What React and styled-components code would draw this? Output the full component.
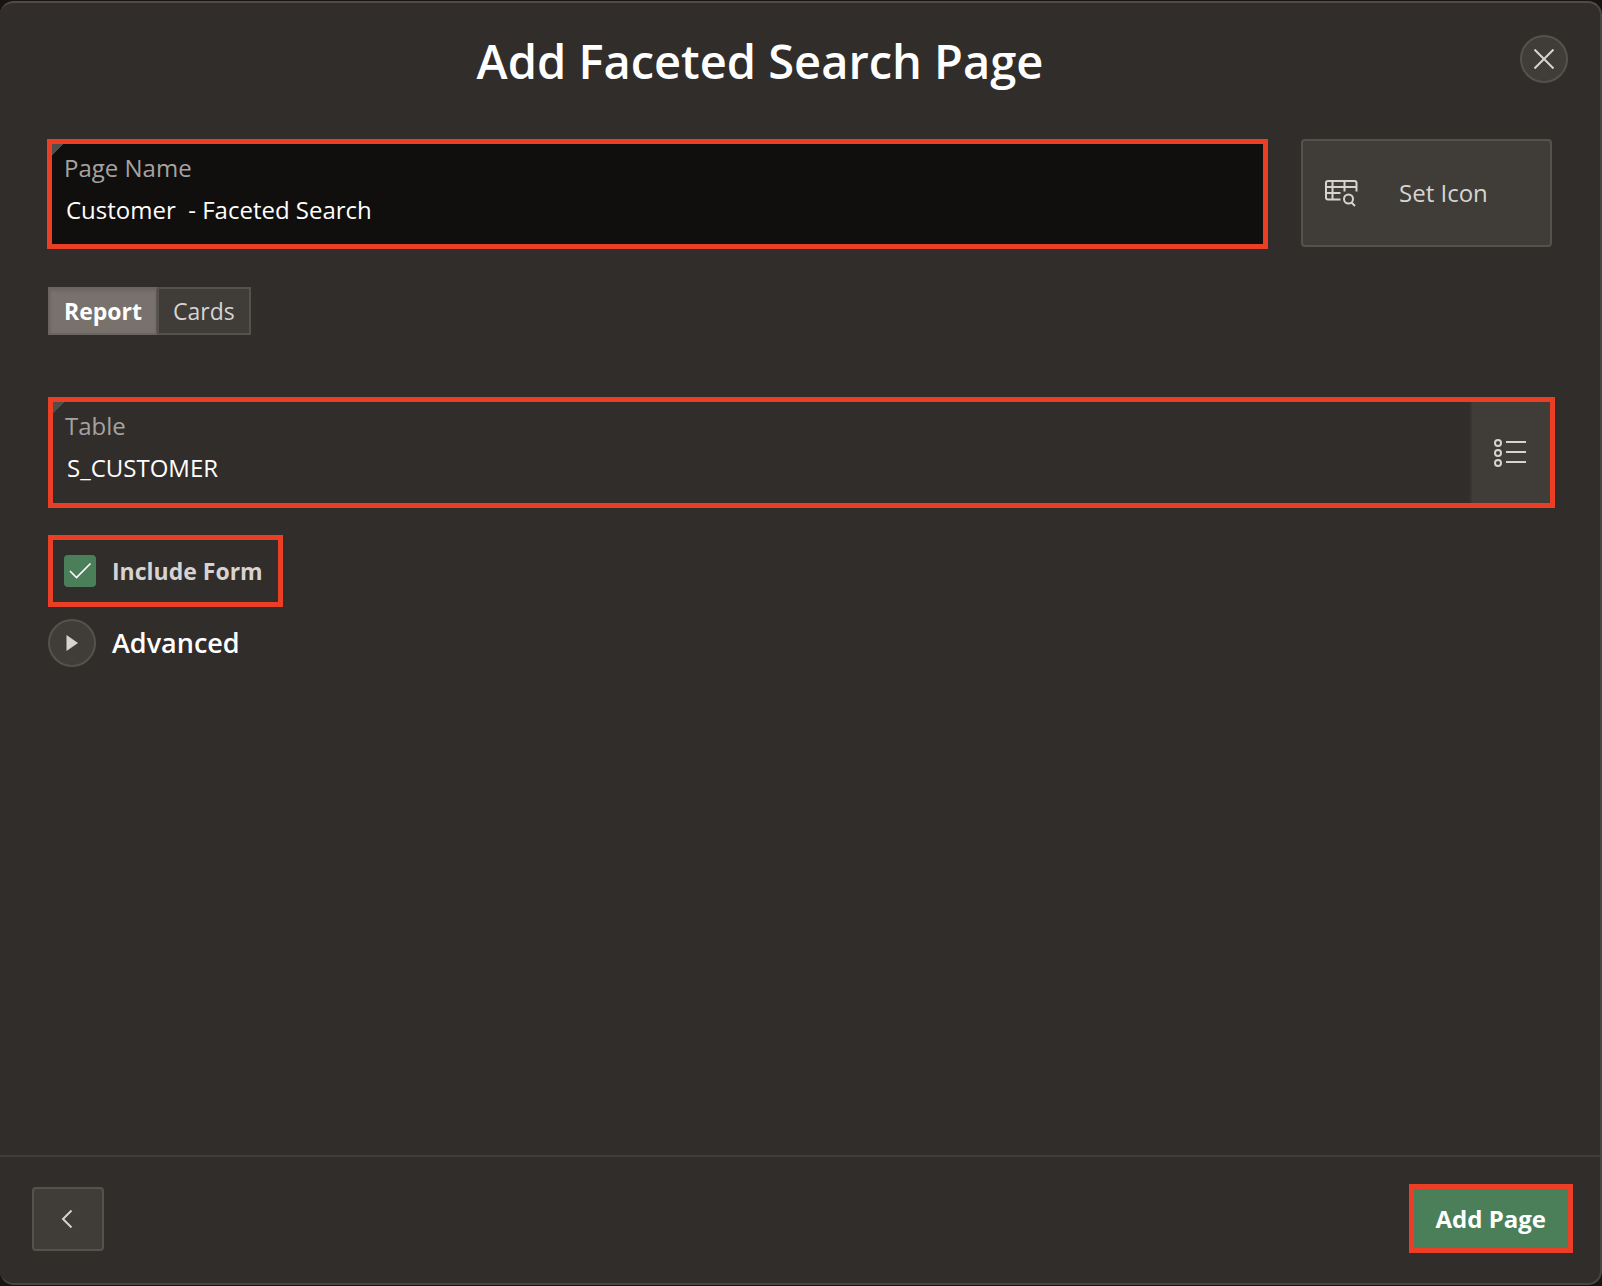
import React, { useState } from "react";
import styled, { createGlobalStyle } from "styled-components";

const GlobalStyle = createGlobalStyle`
  *, *::before, *::after { box-sizing: border-box; }
  body {
    margin: 0;
    background: #171412;
    color: #fff;
    font-family: "Open Sans", "Noto Sans", sans-serif;
    font-size: 24px;
    line-height: 32px;
  }
  button, input { font: inherit; color: inherit; margin: 0; }
  button { cursor: pointer; padding: 0; }
`;

const Dialog = styled.main`
  display: flex;
  flex-direction: column;
  min-height: calc(100vh - 2px);
  margin: 1px 0;
  background: #312d2a;
  border: 2px solid #494543;
  border-top-color: #524a48;
  border-left-width: 0;
  border-radius: 14px;
`;

const Header = styled.header`
  display: flex;
  align-items: flex-start;
  padding: 32px 32px 54px 0;
`;

const Title = styled.h1`
  flex: 1;
  margin: 0;
  padding-top: 2px;
  font-size: 47px;
  line-height: 48px;
  font-weight: 600;
  text-align: center;
`;

const Control = styled.button`
  display: flex;
  align-items: center;
  background: #403c38;
  border: 2px solid #55514d;
  border-radius: 4px;
  color: #d6d4d2;
`;

const CloseButton = styled(Control)`
  justify-content: center;
  width: 48px;
  height: 48px;
  border-radius: 50%;
`;

const Body = styled.form`
  flex: 1;
  display: flex;
  flex-direction: column;
  align-items: flex-start;
  padding: 0 45px 32px 47px;
`;

const NameRow = styled.div`
  display: flex;
  align-items: flex-start;
  align-self: stretch;
  gap: 33px;
  padding-right: 3px;
`;

const Highlight = styled.div`
  display: flex;
  border: 5px solid #ea3f24;
`;

const FieldFrame = styled(Highlight)`
  flex: 1;
  height: ${(p) => p.$height}px;
  background: linear-gradient(135deg, #504d4b 8px, transparent 8px) ${(p) => p.$fill};
`;

const Field = styled.div`
  flex: 1;
  display: flex;
  flex-direction: column;
  padding: 8px 12px;
`;

const FieldLabel = styled.label`
  color: #a5a3a1;
`;

const TextInput = styled.input`
  width: 100%;
  height: 40px;
  margin-top: 5px;
  padding: 0 2px;
  border: 0;
  outline: 0;
  background: transparent;
  color: #fff;
`;

const IconButton = styled(Control)`
  width: 251px;
  height: 108px;
  gap: 41px;
  padding-left: 22px;
`;

const Pills = styled.fieldset`
  display: flex;
  margin: 38px 0 62px 1px;
  padding: 0;
  border: 0;
`;

const Pill = styled.label`
  position: relative;
  height: 48px;
  padding: 6px 14px;
  border: 2px solid #55514d;
  background: #403c38;
  color: #d6d4d2;
  font-size: 23px;
  cursor: pointer;

  & + & { margin-left: -1px; }

  &:has(input:checked) {
    background: #78716c;
    border-color: #6a6560;
    border-right-color: #5c5753;
    box-shadow: inset 0 2px 3px rgba(0, 0, 0, 0.1);
    color: #fff;
    font-weight: 700;
  }

  input {
    position: absolute;
    inset: 0;
    width: 100%;
    height: 100%;
    opacity: 0;
    cursor: pointer;
  }
`;

const TableRow = styled.div`
  display: flex;
  align-self: stretch;
  padding-left: 1px;
`;

const ListButton = styled(Control)`
  justify-content: center;
  width: 80px;
  padding-right: 2px;
  border-width: 0 0 0 2px;
  border-color: #393532;
  border-radius: 0;
`;

const CheckFrame = styled(Highlight)`
  margin: 27px 0 12px 1px;
  height: 72px;
  align-items: center;
  padding: 0 15px 0 11px;
`;

const CheckLabel = styled.label`
  display: grid;
  grid-template-columns: 32px auto;
  align-items: center;
  gap: 16px;
  color: #d6d4d2;
  font-size: 23px;
  font-weight: 700;
  cursor: pointer;

  input, svg { grid-area: 1 / 1; }
  svg { pointer-events: none; visibility: hidden; }
  input:checked + svg { visibility: visible; }
`;

const Checkbox = styled.input`
  appearance: none;
  width: 32px;
  height: 32px;
  border-radius: 4px;
  border: 2px solid #55514d;
  background: #403c38;

  &:checked {
    background: #4a7f59;
    border-color: #4a7f59;
  }
`;

const Disclosure = styled.button`
  display: flex;
  align-items: center;
  gap: 16px;
  margin-left: 1px;
  border: 0;
  background: transparent;
  color: #fff;
  font-size: 27px;
  font-weight: 600;
`;

const DisclosureMark = styled.span`
  display: flex;
  align-items: center;
  justify-content: center;
  width: 48px;
  height: 48px;
  border: 2px solid #55514d;
  border-radius: 50%;
  background: #403c38;

  svg { transform: rotate(${(p) => (p.$open ? 90 : 0)}deg); }
`;

const Footer = styled.footer`
  display: flex;
  align-items: center;
  justify-content: space-between;
  padding: 27px 27px 30px 32px;
  border-top: 2px solid #403c39;
`;

const BackButton = styled(Control)`
  justify-content: center;
  width: 72px;
  height: 64px;
  padding-right: 2px;
`;

const AddButton = styled.button`
  height: 59px;
  padding: 0 22px;
  border: 0;
  background: #4a7f59;
  color: #fff;
  font-weight: 700;
`;

const Stroke = ({ width, height, children, weight = 2 }) => (
  <svg
    width={width}
    height={height}
    viewBox={`0 0 ${width} ${height}`}
    fill="none"
    stroke="currentColor"
    strokeWidth={weight}
    aria-hidden="true"
  >
    {children}
  </svg>
);

export default function App() {
  const [name, setName] = useState("Customer  - Faceted Search");
  const [table, setTable] = useState("S_CUSTOMER");
  const [view, setView] = useState("Report");
  const [includeForm, setIncludeForm] = useState(true);
  const [open, setOpen] = useState(false);

  return (
    <>
      <GlobalStyle />
      <Dialog>
        <Header>
          <Title>Add Faceted Search Page</Title>
          <CloseButton type="button" aria-label="Close">
            <Stroke width={20} height={20}>
              <path d="M0.5 0.5 19.5 19.5M19.5 0.5 0.5 19.5" />
            </Stroke>
          </CloseButton>
        </Header>

        <Body onSubmit={(e) => e.preventDefault()}>
          <NameRow>
            <FieldFrame $fill="#100f0d" $height={110}>
              <Field>
                <FieldLabel htmlFor="page-name">Page Name</FieldLabel>
                <TextInput id="page-name" value={name} onChange={(e) => setName(e.target.value)} />
              </Field>
            </FieldFrame>
            <IconButton type="button">
              <Stroke width={33} height={27}>
                <path d="M15.5 19.5H3a2 2 0 0 1-2-2V3a2 2 0 0 1 2-2H29.5a2 2 0 0 1 2 2V11.5M1 7H31.5M1 13H15.5M7.5 1V19.5M19.5 1V11.5" />
                <circle cx="23.5" cy="19" r="4.5" />
                <path d="M26.5 22.5 30 26" />
              </Stroke>
              Set Icon
            </IconButton>
          </NameRow>

          <Pills aria-label="Page type">
            {["Report", "Cards"].map((option) => (
              <Pill key={option}>
                <input
                  type="radio"
                  name="view"
                  checked={view === option}
                  onChange={() => setView(option)}
                />
                {option}
              </Pill>
            ))}
          </Pills>

          <TableRow>
            <FieldFrame $fill="#312d2a" $height={111}>
              <Field>
                <FieldLabel htmlFor="table">Table</FieldLabel>
                <TextInput id="table" value={table} onChange={(e) => setTable(e.target.value)} />
              </Field>
              <ListButton type="button" aria-label="Choose table">
                <Stroke width={32} height={28}>
                  <circle cx="4" cy="4" r="3" />
                  <circle cx="4" cy="14" r="3" />
                  <circle cx="4" cy="24" r="3" />
                  <path d="M12 3H32M12 13H32M12 23H32" />
                </Stroke>
              </ListButton>
            </FieldFrame>
          </TableRow>

          <CheckFrame>
            <CheckLabel>
              <Checkbox
                type="checkbox"
                checked={includeForm}
                onChange={(e) => setIncludeForm(e.target.checked)}
              />
              <Stroke width={32} height={32}>
                <path d="M6 16 12.5 22.5 26.5 8.5" stroke="#fff" strokeWidth="1.6" />
              </Stroke>
              Include Form
            </CheckLabel>
          </CheckFrame>

          <Disclosure type="button" aria-expanded={open} onClick={() => setOpen(!open)}>
            <DisclosureMark $open={open}>
              <svg width="12" height="16" viewBox="0 0 12 16" aria-hidden="true">
                <path d="M0.5 0 12 8 0.5 16Z" fill="#d6d4d2" />
              </svg>
            </DisclosureMark>
            Advanced
          </Disclosure>
        </Body>

        <Footer>
          <BackButton type="button" aria-label="Back">
            <Stroke width={12} height={18}>
              <path d="M10.5 0.5 2 9 10.5 17.5" />
            </Stroke>
          </BackButton>
          <Highlight>
            <AddButton type="button">Add Page</AddButton>
          </Highlight>
        </Footer>
      </Dialog>
    </>
  );
}
